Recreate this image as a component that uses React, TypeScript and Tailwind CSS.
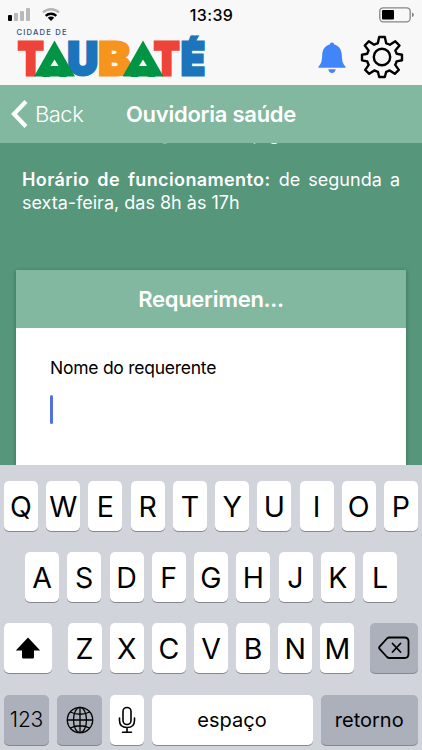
import type { ReactNode } from 'react'

type KeyProps = {
  children: ReactNode
  className?: string
  dark?: boolean
}

const rows = ['QWERTYUIOP', 'ASDFGHJKL', 'ZXCVBNM']

function Key({ children, className = 'w-[34px]', dark = false }: KeyProps) {
  return (
    <button
      className={`flex h-[50px] shrink-0 items-center justify-center rounded-[5px] shadow-[0_1px_0_#85888d] ${
        dark ? 'bg-[#abb0bb]' : 'bg-white'
      } ${className}`}
    >
      {children}
    </button>
  )
}

function Letter({ value }: { value: string }) {
  return (
    <Key>
      <span className="pt-[2px] text-[28.5px] leading-none">{value}</span>
    </Key>
  )
}

function StatusBar() {
  return (
    <div className="flex h-7 items-center justify-between pt-[1px] pr-[7px] pl-2">
      <div className="flex w-[150px] items-center gap-3">
        <svg width="22" height="13" viewBox="0 0 22 13">
          <rect x="0" y="7" width="4" height="6" rx="1" fill="#000" />
          <rect x="6" y="5" width="4" height="8" rx="1" fill="#b9b9b9" />
          <rect x="12" y="3" width="4" height="10" rx="1" fill="#b9b9b9" />
          <rect x="18" y="0" width="4" height="13" rx="1" fill="#b9b9b9" />
        </svg>
        <svg width="18" height="13" viewBox="0 0 18 13" fill="none" strokeWidth="2.3">
          <path d="M1 4.5a11.5 11.5 0 0 1 16 0" stroke="#b4b4b4" />
          <path d="M3.7 7.9a7.6 7.6 0 0 1 10.6 0" stroke="#000" />
          <path d="M9 13 5.8 9.8a4.6 4.6 0 0 1 6.4 0Z" fill="#000" />
        </svg>
      </div>
      <span className="text-[16px] font-medium tracking-[0.4px]">13:39</span>
      <div className="flex w-[150px] justify-end">
        <svg width="36" height="16" viewBox="0 0 36 16">
          <rect x="0.8" y="0.8" width="30.4" height="14" rx="3.5" fill="none" stroke="#858585" strokeWidth="1.3" />
          <rect x="3" y="3" width="12" height="9.6" rx="1" fill="#000" />
          <path d="M33 5.5c2.5 1 2.5 3.6 0 4.6Z" fill="#858585" />
        </svg>
      </div>
    </div>
  )
}

function Logo() {
  return (
    <svg width="190" height="50" viewBox="16 28 190 50" className="font-[Inter]">
      <clipPath id="accent">
        <path d="M178 35.5H206V78H178Z" />
      </clipPath>
      <text x="16.5" y="35" fontSize="7.6" fontWeight="500" fill="#2c4f8a" textLength="50">
        CIDADE DE
      </text>
      <g fontSize="45.5" fontWeight="900" strokeWidth="3">
        <text x="18" y="75" fill="#ee4338" stroke="#ee4338" textLength="25.5" lengthAdjust="spacingAndGlyphs">T</text>
        <text x="67.5" y="75" fill="#1c75bc" stroke="#1c75bc" textLength="30.5" lengthAdjust="spacingAndGlyphs">U</text>
        <text x="98.5" y="75" fill="#f7941d" stroke="#f7941d" textLength="32" lengthAdjust="spacingAndGlyphs">B</text>
        <text x="154" y="75" fill="#ee4338" stroke="#ee4338" textLength="25.5" lengthAdjust="spacingAndGlyphs">T</text>
        <g clipPath="url(#accent)">
          <text x="181" y="75" fill="#1c75bc" stroke="#1c75bc" textLength="24" lengthAdjust="spacingAndGlyphs">É</text>
        </g>
      </g>
      <g fontSize="36" fontWeight="900" fill="#009444">
        <path d="M54.5 40.5 75 76.5H34Z" />
        <text x="41.5" y="76.5" textLength="26" lengthAdjust="spacingAndGlyphs">A</text>
        <path d="M143 40.5 163.5 76.5H122.5Z" />
        <text x="130" y="76.5" textLength="26" lengthAdjust="spacingAndGlyphs">A</text>
      </g>
      <path d="M54.5 59.5 58.5 66H50.5ZM143 59.5 147 66H139Z" fill="#f8f8f8" />
    </svg>
  )
}

function BellIcon() {
  return (
    <svg width="28" height="32" viewBox="0 0 28 32" fill="#4285f8">
      <path d="M14 0.5c1.3 0 2 .8 2.2 2 5 1.3 7.3 5 7.6 10.5.3 6 .8 8.5 3.7 11.5v1.3H.5v-1.3C3.4 21.5 3.9 19 4.2 13 4.5 7.5 6.8 3.8 11.8 2.5c.2-1.2.9-2 2.2-2Z" />
      <path d="M10.3 27.2h7.4c-.3 2.4-1.7 3.8-3.7 3.8s-3.4-1.4-3.7-3.8Z" />
    </svg>
  )
}

function GearIcon() {
  return (
    <svg width="44" height="44" viewBox="0 0 44 44" fill="none" stroke="#000" strokeWidth="2.4" strokeLinejoin="round">
      <path d="M19.2 2h5.6l1.4 6.3q2 .5 3.7 1.4L35.3 6.3 39.5 10.5 35.3 15.5q.8 1.5 1.3 3.3L42 19.7V25.3L36.6 26.4q-.5 1.9-1.4 3.5L38.8 34.9 34.8 38.8 29.7 35.4q-1.7.9-3.5 1.4L24.8 42H19.2L17.9 36.8q-1.9-.5-3.6-1.4L9.2 38.8 5.2 34.9 8.7 29.9q-.9-1.7-1.4-3.5L2 25.3V19.7L7.3 18.7q.5-1.8 1.3-3.3L4.8 10.5 8.8 6.3 14.1 9.7q1.8-1 3.7-1.4Z" />
      <circle cx="22" cy="22" r="8.2" />
    </svg>
  )
}

function Keyboard() {
  return (
    <div className="flex h-[285px] shrink-0 flex-col gap-[21.2px] border-t border-[#c8d6d5] bg-[#d1d4da] px-1 pt-[15px]">
      <div className="flex justify-between">
        {rows[0].split('').map((l) => (
          <Letter key={l} value={l} />
        ))}
      </div>
      <div className="flex justify-between px-[21px]">
        {rows[1].split('').map((l) => (
          <Letter key={l} value={l} />
        ))}
      </div>
      <div className="flex justify-between">
        <Key className="w-12">
          <svg width="26" height="22" viewBox="0 0 26 22">
            <path d="M13 .5 25.2 13.5H19v6.8q0 1.2-1.2 1.2H8.2Q7 21.5 7 20.3V13.5H.8Z" />
          </svg>
        </Key>
        <div className="flex w-[287px] justify-between">
          {rows[2].split('').map((l) => (
            <Letter key={l} value={l} />
          ))}
        </div>
        <Key dark className="w-12">
          <svg width="32" height="24" viewBox="0 0 32 24" fill="none" stroke="#000" strokeWidth="1.8" strokeLinejoin="round" strokeLinecap="round">
            <path d="M11.5 1.5H26.5q4 0 4 4V18Q30.5 22 26.5 22H11.5Q10 22 9 21L1.8 13.2Q.5 11.8 1.8 10.3L9 2.5Q10 1.5 11.5 1.5Z" />
            <path d="M14.5 7.5 22.5 16M22.5 7.5 14.5 16" />
          </svg>
        </Key>
      </div>
      <div className="flex">
        <Key dark className="w-[45px]">
          <span className="pt-[1px] text-[21px] font-[350] tracking-[-0.2px]">123</span>
        </Key>
        <Key dark className="ml-2 w-[45px]">
          <svg width="28" height="28" viewBox="0 0 28 28" fill="none" stroke="#000" strokeWidth="1.3">
            <circle cx="14" cy="14" r="12.7" />
            <ellipse cx="14" cy="14" rx="6.5" ry="12.7" />
            <path d="M14 1.3V26.7M1.3 14H26.7M4.3 6q9.7 4.5 19.4 0M4.3 22q9.7-4.5 19.4 0" />
          </svg>
        </Key>
        <Key className="ml-[7.5px] w-[34px]">
          <svg width="18" height="28" viewBox="0 0 18 28" fill="none" stroke="#000" strokeWidth="1.6" strokeLinecap="round">
            <rect x="5" y="1.5" width="8" height="17" rx="4" />
            <path d="M1.5 12v2.5q0 7 7.5 7t7.5-7V12M9 21.5V26M4.5 26.2H13.5" />
          </svg>
        </Key>
        <Key className="ml-2 w-[161px]">
          <span className="text-[20px]">espaço</span>
        </Key>
        <Key dark className="ml-2 w-[97.5px]">
          <span className="text-[20px]">retorno</span>
        </Key>
      </div>
    </div>
  )
}

export default function App() {
  return (
    <div className="flex h-[750px] w-[422px] flex-col overflow-hidden bg-[#56967a] font-[Inter,sans-serif] text-black">
      <header className="h-[85px] shrink-0 bg-[#f8f8f8]">
        <StatusBar />
        <div className="flex items-start pr-[18px] pl-4">
          <Logo />
          <div className="ml-auto flex items-start gap-[14px]">
            <span className="pt-[13.5px]">
              <BellIcon />
            </span>
            <span className="pt-[7px]">
              <GearIcon />
            </span>
          </div>
        </div>
      </header>

      <nav className="grid h-[58px] shrink-0 grid-cols-[84px_1fr_84px] items-center bg-[#82b8a0] text-white">
        <button className="flex items-center gap-[7px] pl-[11px]">
          <svg width="17" height="28" viewBox="0 0 17 28" className="shrink-0" fill="none" stroke="currentColor" strokeWidth="4.2">
            <path d="M15 1.5 3 14 15 26.5" />
          </svg>
          <span className="text-[22px] font-light tracking-[-0.5px]">Back</span>
        </button>
        <h1 className="text-center text-[22px] font-semibold tracking-[-0.25px]">Ouvidoria saúde</h1>
      </nav>

      <main className="min-h-0 flex-1 overflow-hidden px-4">
        <div className="-mt-[21px] px-[6px] text-[18px] leading-[23px] text-white">
          <p className="pl-[3px]">ouvidoriasaude@taubate.sp.gov.br</p>
          <p className="mt-[23px] text-justify">
            <b className="font-semibold tracking-[0.38px]">Horário de funcionamento:</b> de segunda a sexta-feira, das 8h às 17h
          </p>
        </div>
        <section className="mt-[56px] h-[220px] bg-white shadow-[0_1px_4px_rgba(0,0,0,0.3)]">
          <h2 className="flex h-[58px] items-center justify-center bg-[#82b8a0] text-[22px] font-semibold tracking-[-0.3px] text-white">
            Requerimen...
          </h2>
          <div className="px-[34px] pt-7">
            <label className="block text-[17.5px] leading-6 tracking-[-0.25px]">Nome do requerente</label>
            <div className="mt-[15px] h-[29px] w-[3px] rounded-sm bg-[#5271df]" />
          </div>
        </section>
      </main>

      <Keyboard />
    </div>
  )
}
